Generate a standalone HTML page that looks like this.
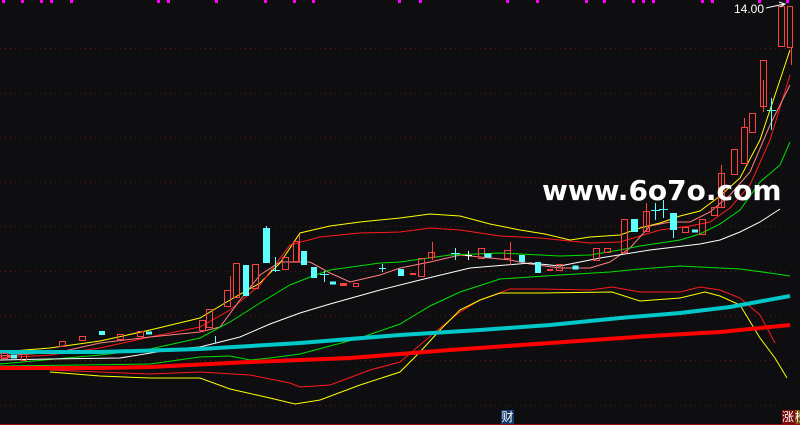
<!DOCTYPE html>
<html><head><meta charset="utf-8"><style>
html,body{margin:0;padding:0;background:#0e0e11;width:800px;height:425px;overflow:hidden}
svg{position:absolute;left:0;top:0}
.wm{position:absolute;left:542px;top:174px;font:bold 28px "DejaVu Sans","Liberation Sans",sans-serif;color:#fff;letter-spacing:0px;white-space:nowrap}
.lbl{position:absolute;left:734px;top:2px;font:12px "Liberation Sans",sans-serif;color:#fff}
.cai{position:absolute;left:501px;top:410px;width:13px;height:14px;background:#123a6a;color:#fff;font:12px "Noto Sans CJK SC",sans-serif;line-height:14px;text-align:center}
.zh{position:absolute;left:782px;top:410px;width:13px;height:14px;background:#7a0b0b;color:#fff;font:12px "Noto Sans CJK SC",sans-serif;line-height:14px}
.bang{position:absolute;left:795px;top:410px;width:5px;height:14px;background:#7a4a0b;overflow:hidden;color:#fff;font:12px "Noto Sans CJK SC",sans-serif;line-height:14px}
</style></head><body>
<svg width="800" height="425" viewBox="0 0 800 425">
<g fill="#ff00ff">
<rect x="2" y="0" width="3" height="3"/><rect x="21" y="0" width="3" height="3"/><rect x="40" y="0" width="3" height="3"/><rect x="50" y="0" width="3" height="3"/><rect x="70" y="0" width="3" height="3"/><rect x="157" y="0" width="3" height="3"/><rect x="167" y="0" width="3" height="3"/><rect x="215" y="0" width="3" height="3"/><rect x="264" y="0" width="3" height="3"/><rect x="293" y="0" width="3" height="3"/><rect x="312" y="0" width="3" height="3"/><rect x="398" y="0" width="3" height="3"/>
<rect x="419" y="0" width="3" height="3"/><rect x="506" y="0" width="3" height="3"/><rect x="536" y="0" width="3" height="3"/><rect x="585" y="0" width="3" height="3"/><rect x="603" y="0" width="3" height="3"/><rect x="632" y="0" width="3" height="3"/><rect x="642" y="0" width="3" height="3"/><rect x="652" y="0" width="3" height="3"/><rect x="701" y="0" width="3" height="3"/><rect x="711" y="0" width="3" height="3"/><rect x="758" y="0" width="3" height="3"/><rect x="786" y="0" width="3" height="3"/>
</g>
<g stroke="#5a1515" stroke-width="1" stroke-dasharray="1 4">
<line x1="0" y1="48.5" x2="790" y2="48.5"/><line x1="0" y1="93.5" x2="790" y2="93.5"/><line x1="0" y1="137.5" x2="790" y2="137.5"/><line x1="0" y1="182.5" x2="790" y2="182.5"/><line x1="0" y1="226.5" x2="790" y2="226.5"/><line x1="0" y1="271.5" x2="790" y2="271.5"/><line x1="0" y1="315.5" x2="790" y2="315.5"/><line x1="0" y1="360.5" x2="790" y2="360.5"/><line x1="0" y1="405.5" x2="790" y2="405.5"/>
</g>
<line x1="0" y1="424.5" x2="800" y2="424.5" stroke="#8a1010"/>
<g fill="none" stroke-width="1">
<polyline stroke="#ffff00" points="0,352 50,348 100,341 150,330 200,318 230,300 260,283 280,263 300,233 330,226 360,222 400,218 430,214 460,216 490,224 520,230 545,234 570,240 590,237 620,235 640,228 660,223 680,216 700,211 720,196 740,178 760,140 780,80 790,50"/>
<polyline stroke="#ff1a1a" points="0,358 50,355 100,348 150,337 200,327 230,310 260,285 290,245 320,237 360,233 400,232 430,228 460,230 500,236 540,238 570,241 590,243 620,242 640,236 660,230 690,226 710,222 730,208 750,185 770,140 790,75"/>
<polyline stroke="#ff8080" points="0,356 60,352 100,343 150,337 200,332 220,327 240,300 260,275 280,262 300,262 310,262 330,273 350,282 380,275 400,268 430,262 460,255 490,258 510,260 530,264 560,268 590,268 610,262 630,248 650,226 670,222 690,222 710,212 730,195 750,172 770,125 790,85"/>
<polyline stroke="#00e000" points="0,364 100,355 150,349 200,338 230,322 260,303 290,285 310,277 330,270 380,263 400,262 450,255 500,253 560,256 590,255 620,250 640,246 680,240 700,234 720,224 740,210 760,182 780,165 790,142"/>
<polyline stroke="#ffffff" points="0,360 50,359 120,358 175,349 200,347 240,337 270,324 300,313 330,304 380,290 420,280 470,268 530,263 560,266 600,258 650,250 700,244 720,240 740,232 760,222 780,209"/>
<polyline stroke="#00e000" points="0,366 80,365 150,364 200,357 230,356 250,360 270,358 300,354 330,346 360,338 400,324 430,306 460,292 500,279 560,275 610,272 640,269 680,266 700,267 740,269 770,273 790,276"/>
<polyline stroke="#ff1a1a" points="50,370 100,372 150,374 200,372 250,375 290,383 300,387 330,385 370,370 400,362 420,345 440,328 460,312 480,300 510,289 540,289 590,290 612,287 640,292 680,292 700,287 720,290 740,298 760,315 775,343"/>
<polyline stroke="#ffff00" points="50,372 100,376 150,378 200,378 230,389 270,398 295,404 320,400 360,385 400,372 420,352 440,330 460,310 480,300 500,293 540,293 612,292 640,301 680,298 705,292 720,296 740,305 760,338 775,358 787,378"/>
<polyline stroke="#00c8c8" stroke-width="4" points="0,352 100,352 200,349 300,343 400,335 480,330 550,325 620,318 680,313 730,307 790,296"/>
<polyline stroke="#ff0000" stroke-width="4" points="0,368 100,368 150,367 250,362 350,358 450,350 550,343 650,336 720,332 790,325"/>
</g>
<g stroke-width="1">
<g fill="none" stroke="#ff4040">
<rect x="1.5" y="353.5" width="6" height="5"/><rect x="21.5" y="354.5" width="5" height="6"/><rect x="59.5" y="341.5" width="6" height="5"/><rect x="79.5" y="336.5" width="6" height="4"/><rect x="117.5" y="334.5" width="6" height="5"/><rect x="137.5" y="331.5" width="6" height="5"/><rect x="199.5" y="320.5" width="6" height="10"/><rect x="206.5" y="309.5" width="6" height="18"/><rect x="224.5" y="290.5" width="6" height="16"/><rect x="233.5" y="263.5" width="6" height="34"/><rect x="252.5" y="264.5" width="6" height="24"/><rect x="282.5" y="257.5" width="6" height="12"/><rect x="293.5" y="241.5" width="5" height="20"/><rect x="353.5" y="283.5" width="5" height="3"/><rect x="418.5" y="258.5" width="6" height="18"/><rect x="428.5" y="252.5" width="6" height="5"/><rect x="478.5" y="248.5" width="6" height="10"/><rect x="504.5" y="250.5" width="6" height="8"/><rect x="556.5" y="264.5" width="6" height="6"/><rect x="593.5" y="248.5" width="6" height="12"/><rect x="604.5" y="248.5" width="6" height="4"/><rect x="621.5" y="219.5" width="6" height="33"/><rect x="643.5" y="211.5" width="6" height="20"/><rect x="682.5" y="227.5" width="6" height="5"/><rect x="699.5" y="219.5" width="6" height="15"/><rect x="711.5" y="207.5" width="6" height="8"/><rect x="718.5" y="173.5" width="6" height="34"/><rect x="731.5" y="149.5" width="6" height="25"/><rect x="741.5" y="127.5" width="6" height="36"/><rect x="749.5" y="113.5" width="6" height="19"/><rect x="760.5" y="60.5" width="6" height="46"/><rect x="778.5" y="6.5" width="6" height="40"/><rect x="787.5" y="6.5" width="5" height="41"/>
</g>
<g stroke="#ff4040">
<line x1="230.5" y1="276" x2="230.5" y2="306"/><line x1="299.5" y1="235" x2="299.5" y2="262"/><line x1="432.5" y1="242" x2="432.5" y2="260"/><line x1="510.5" y1="242" x2="510.5" y2="265"/><line x1="646.5" y1="203" x2="646.5" y2="231"/><line x1="721.5" y1="165" x2="721.5" y2="207"/><line x1="744.5" y1="118" x2="744.5" y2="127"/><line x1="763.5" y1="80" x2="763.5" y2="112"/><line x1="791.5" y1="47" x2="791.5" y2="65"/>
</g>
<g fill="#ff4040"><rect x="340" y="283" width="7" height="3"/><rect x="7" y="356" width="6" height="2"/><rect x="410" y="273" width="6" height="2"/><rect x="547" y="269" width="6" height="2"/></g>
<g fill="#5cffff" stroke="#5cffff">
<rect x="263.5" y="228.5" width="6" height="34"/><rect x="243.5" y="265.5" width="5" height="30"/><rect x="301.5" y="251.5" width="5" height="13"/><rect x="311.5" y="267.5" width="5" height="10"/><rect x="330.5" y="282" width="5" height="2"/><rect x="99.5" y="331.5" width="5" height="3"/><rect x="146.5" y="332" width="5" height="2"/><rect x="11.5" y="355" width="5" height="3"/><rect x="398.5" y="269.5" width="5" height="6"/><rect x="535.5" y="262.5" width="5" height="10"/><rect x="573" y="266" width="5" height="3"/><rect x="631.5" y="219.5" width="6" height="12"/><rect x="670.5" y="213.5" width="6" height="16"/><rect x="692.5" y="230" width="5" height="2"/><rect x="485" y="254" width="6" height="3"/><rect x="519.5" y="255.5" width="5" height="6"/></g>
<g stroke="#5cffff">
<line x1="266.5" y1="226" x2="266.5" y2="228"/><line x1="275.5" y1="257" x2="275.5" y2="272"/><line x1="271" y1="270.5" x2="280" y2="270.5"/><line x1="324.5" y1="271" x2="324.5" y2="282"/><line x1="320" y1="274.5" x2="329" y2="274.5"/><line x1="382.5" y1="264" x2="382.5" y2="272"/><line x1="379" y1="268.5" x2="386" y2="268.5"/><line x1="455.5" y1="248" x2="455.5" y2="260"/><line x1="451" y1="253.5" x2="460" y2="253.5"/><line x1="655.5" y1="203" x2="655.5" y2="220"/><line x1="651" y1="210.5" x2="660" y2="210.5"/><line x1="663.5" y1="200" x2="663.5" y2="218"/><line x1="659" y1="209.5" x2="668" y2="209.5"/><line x1="673.5" y1="229" x2="673.5" y2="238"/><line x1="771.5" y1="98" x2="771.5" y2="130"/><line x1="767" y1="110.5" x2="776" y2="110.5"/><line x1="215.5" y1="336" x2="215.5" y2="343"/></g>
<g stroke="#ffffff"><line x1="468.5" y1="251" x2="468.5" y2="260"/><line x1="465" y1="255.5" x2="472" y2="255.5"/><polyline fill="none" points="766,8 784,4"/><polyline fill="none" points="779,2 785,4 780,7"/></g>
</g>
</svg>
<div class="lbl">14.00</div>
<div class="wm">www.6o7o.com</div>
<div class="cai">财</div>
<div class="zh">涨</div>
<div class="bang">榜</div>
</body></html>
